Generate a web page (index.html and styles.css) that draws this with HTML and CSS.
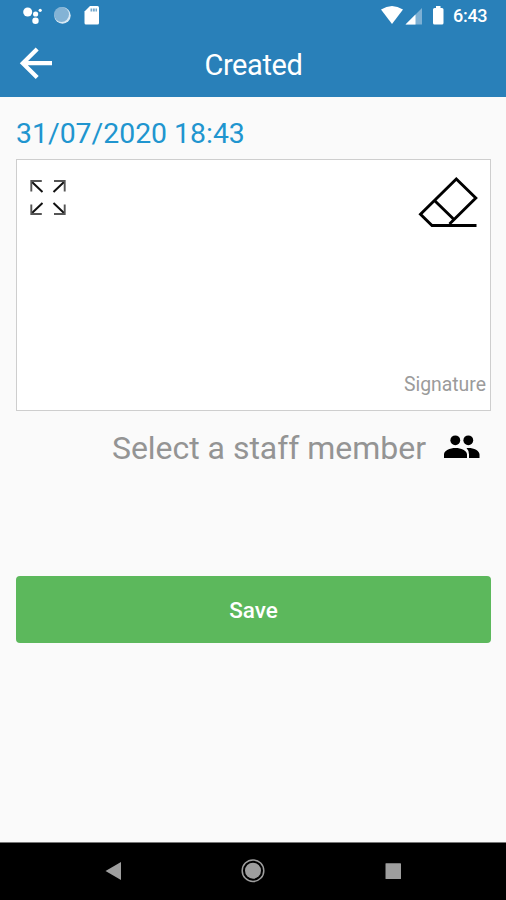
FILE: index.html
```html
<!DOCTYPE html>
<html lang="en">
<head>
<meta charset="utf-8">
<title>Created</title>
<link rel="stylesheet" href="styles.css">
</head>
<body>
<div class="screen">
  <div class="status">
    <svg class="notifications" width="80" height="24" viewBox="22 4 80 24">
      <g fill="#fff"><circle cx="27.7" cy="12" r="4.5"/><circle cx="35.6" cy="14" r="2.6"/><circle cx="40.2" cy="10.3" r="1.6"/><circle cx="35.5" cy="20.7" r="3.2"/></g>
      <circle cx="62.5" cy="15.5" r="8.2" fill="#d9e9f4"/><circle cx="61.5" cy="14.5" r="7.5" fill="#83b3d5"/>
      <path d="M90 6h7.500q1.500 0 1.500 1.500v15.500q0 1.500-1.500 1.500H86q-1.500 0-1.500-1.500V11.500z" fill="#fff"/>
      <path d="M90.500 8.500h1.800v3h-1.800zM93 8.500h1.800v3H93zM95.500 8.500h1.500v3h-1.500z" fill="#76a9cc"/>
    </svg>
    <svg class="signals" width="64" height="24" viewBox="380 4 64 24">
      <path d="M381 9.500q11-7 22 0L392 24z" fill="#fff"/>
      <path d="M422 8v16.500h-16.500z" fill="#7db0d4"/><path d="M415.500 14.500v10h-10z" fill="#fff"/>
      <path d="M436 6h4.500v2h1.500q1.500 0 1.500 1.500v13.500q0 1.500-1.500 1.500h-7.500q-1.500 0-1.500-1.500V9.500Q433 8 434.500 8h1.500z" fill="#fff"/>
    </svg>
    <span class="clock">6:43</span>
  </div>
  <header class="header">
    <svg class="back" width="36" height="36" viewBox="18 45 36 36" fill="none" stroke="#fff" stroke-width="4.200"><path d="M37.200 49L22.800 63.200l14.400 14.300M22.800 63.200H52"/></svg>
    <h1 class="title">Created</h1>
  </header>
  <main class="content">
    <div class="date">31/07/2020 18:43</div>
    <section class="pad">
      <div class="tools">
        <svg class="expand" width="38" height="38" viewBox="29 179 38 38" fill="none">
          <path d="M32 182l10.500 10M64 182l-10.500 10M32 213L42.500 203M64 213L53.500 203" stroke="#111" stroke-width="2"/>
          <path d="M31.300 191.500v-10.500h10.500M54 181h10.700v10.500M31.300 204.500v9.500h10.500M54 214h10.700v-9.500" stroke="#555" stroke-width="1.900"/>
        </svg>
        <svg width="60" height="54" viewBox="418 176 60 54" fill="none" stroke="#000" stroke-width="2.900"><path d="M476.500 225.500H432L420.500 214.200 456.300 179 475.800 198 449.500 224M434.500 200.500L453 218.500"/></svg>
      </div>
      <span class="hint">Signature</span>
    </section>
    <div class="staff">
      <span class="staff-label">Select a staff member</span>
      <svg width="36" height="24" viewBox="444 435 36 24" fill="#000"><circle cx="455.300" cy="440.300" r="4.900"/><circle cx="468.300" cy="440.300" r="4.900"/><path d="M444 458v-3.500c0-4 6-6.500 11.500-6.500s11.500 2.500 11.500 6.500v3.500zM467.500 448c6-.3 12 2.500 12 6.500v3.500h-10.500v-3.500q0-4-2.500-6.500z"/></svg>
    </div>
    <button class="save">Save</button>
  </main>
  <nav class="nav">
    <svg width="506" height="56" viewBox="0 843 506 56" fill="#9e9e9e"><path d="M105.500 871L121 862v18z"/><circle cx="253" cy="870.700" r="8"/><circle cx="253" cy="870.700" r="10.800" fill="none" stroke="#9e9e9e" stroke-width="1.500"/><rect x="385.500" y="863.200" width="15.500" height="15.800" rx=".6"/></svg>
  </nav>
</div>
</body>
</html>
```
FILE: styles.css
```css
* { box-sizing: border-box; }
body { margin: 0; font-family: Roboto, sans-serif; }
.screen { width: 506px; height: 900px; display: flex; flex-direction: column; background: #fafafa; overflow: hidden; }
svg { display: block; flex: none; }
.status { height: 32px; padding: 4px 0 0 22px; display: flex; align-items: flex-start; background: #2980b9; color: #fff; }
.signals { margin-left: 278px; }
.clock { margin-left: 9px; font-size: 18px; line-height: 24px; font-weight: 500; letter-spacing: -.3px; white-space: nowrap; }
.header { height: 65px; padding: 13px 18px 0; display: grid; grid-template-columns: 36px 1fr 36px; background: #2980b9; color: #fff; }
.title { margin: 2px 0 0; padding-left: 1px; font-size: 29px; line-height: 36px; font-weight: 400; letter-spacing: -.4px; text-align: center; }
.content { flex: 1; padding: 18px 15px 0 16px; display: flex; flex-direction: column; }
.date { height: 44px; font-size: 28.4px; line-height: 37px; color: #2095cf; white-space: nowrap; }
.pad { height: 252px; padding: 16px 4px 13px 12px; border: 1px solid #cecece; background: #fff; display: flex; flex-direction: column; justify-content: space-between; }
.tools { display: flex; justify-content: space-between; padding-right: 8px; }
.expand { margin-top: 3px; }
.hint { align-self: flex-end; font-size: 19.4px; line-height: 24px; color: #9b9b9b; }
.staff { height: 165px; padding: 17px 11px 0 0; display: flex; justify-content: flex-end; align-items: flex-start; gap: 18px; }
.staff-label { font-size: 32px; line-height: 40px; letter-spacing: -.03px; color: #949494; white-space: nowrap; }
.staff svg { margin-top: 7px; }
.save { height: 67px; padding: 0; border: 0; border-radius: 4px; background: #5cb85c; color: #fff; font: 500 22.5px/28px Roboto, sans-serif; }
.nav { height: 58px; border-top: 1px solid #777; background: #000; }
```
